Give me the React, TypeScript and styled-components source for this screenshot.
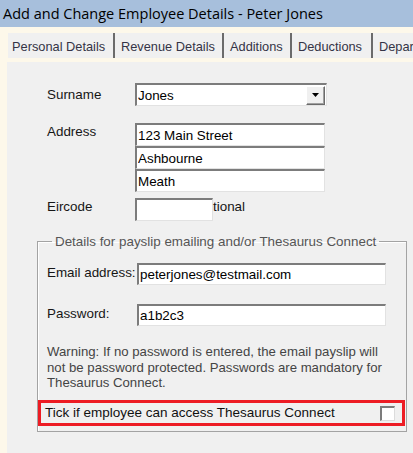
import React, { useState } from "react";
import styled, { createGlobalStyle } from "styled-components";

const GlobalStyle = createGlobalStyle`
  html, body {
    margin: 0;
    padding: 0;
    background: #fdf8ea;
  }
  body {
    font-family: "Liberation Sans", Arial, sans-serif;
    font-size: 13.4px;
    color: #1a1a1a;
  }
`;

const Window = styled.div`
  width: 413px;
  height: 453px;
  overflow: hidden;
  display: flex;
  flex-direction: column;
  background: #fdf8ea;
`;

const TitleBar = styled.div`
  height: 27px;
  flex: none;
  background: #a7bfdc;
  display: flex;
  align-items: center;
  padding-left: 3px;
  font-family: "Open Sans", "Noto Sans", sans-serif;
  font-size: 14.5px;
  color: #000;
  white-space: nowrap;
`;

const TabStrip = styled.div`
  flex: none;
  display: flex;
  padding: 6px 0 0 8px;
  margin-bottom: 4px;
  white-space: nowrap;
`;

const Tab = styled.div<{ $w: number; $first?: boolean }>`
  flex: none;
  width: ${(p) => p.$w}px;
  height: 25px;
  box-sizing: border-box;
  background: #f0f0f0;
  border-left: ${(p) => (p.$first ? "none" : "2px solid #6b6b6b")};
  display: flex;
  align-items: center;
  padding: 1px 0 0 ${(p) => (p.$first ? 4 : 6)}px;
  font-size: 12.8px;
  color: #343446;
  cursor: default;
  overflow: hidden;
`;

const Panel = styled.div`
  flex: 1;
  margin-left: 7px;
  background: #f0f0f0;
  padding: 21px 0 0 0;
`;

const Field = styled.div<{ $mt?: number; $col?: number; $indent?: number }>`
  display: grid;
  grid-template-columns: ${(p) => p.$col ?? 88}px auto;
  align-items: start;
  margin-top: ${(p) => p.$mt ?? 0}px;
  padding-left: ${(p) => p.$indent ?? 40}px;
`;

const Label = styled.div<{ $pt?: number }>`
  line-height: 15px;
  padding-top: ${(p) => p.$pt ?? 0}px;
  color: #161616;
  white-space: nowrap;
`;

const Stack = styled.div`
  display: flex;
  flex-direction: column;
`;

const Sunken = styled.div<{ $w: number; $h?: number }>`
  width: ${(p) => p.$w}px;
  height: ${(p) => p.$h ?? 23}px;
  box-sizing: border-box;
  background: #fff;
  border-top: 2px solid #7c7c7c;
  border-left: 2px solid #7c7c7c;
  border-right: 1px solid #e2e2e2;
  border-bottom: 1px solid #e2e2e2;
  display: flex;
  align-items: center;
`;

const TextInput = styled.input`
  flex: 1;
  min-width: 0;
  height: 100%;
  border: none;
  outline: none;
  background: transparent;
  padding: 0 0 0 1px;
  margin: 0;
  font-family: "Liberation Sans", Arial, sans-serif;
  font-size: 13.4px;
  color: #000;
`;

const DropButton = styled.div`
  width: 19px;
  height: 19px;
  flex: none;
  box-sizing: border-box;
  margin-right: 1px;
  background: #f0f0f0;
  border-top: 1px solid #fff;
  border-left: 1px solid #fff;
  border-right: 1px solid #6b6b6b;
  border-bottom: 1px solid #6b6b6b;
  box-shadow: inset -1px -1px 0 #a0a0a0;
  display: flex;
  align-items: center;
  justify-content: center;
`;

const InlineRow = styled.div`
  display: flex;
  align-items: flex-start;
`;

const Aside = styled.span`
  line-height: 15px;
  padding-top: 1px;
  color: #161616;
`;

const Group = styled.fieldset`
  margin: 13px 0 0 30px;
  width: 370px;
  box-sizing: border-box;
  border: 1px solid #a3a3a3;
  box-shadow: inset 1px 1px 0 #fff;
  padding: 14px 9px 5px 9px;
  min-width: 0;
`;

const Legend = styled.legend`
  margin-left: 5px;
  padding: 0 3px;
  line-height: 15px;
  color: #555;
`;

const Warning = styled.p`
  margin: 18px 0 0 0;
  font-size: 13.2px;
  line-height: 15.5px;
  color: #444;
  width: 345px;
`;

const Highlight = styled.div`
  margin: 9px -8px 0 -9px;
  height: 26px;
  box-sizing: border-box;
  border: 3px solid #ed1c24;
  display: flex;
  align-items: center;
  justify-content: space-between;
  padding: 0 7px 0 4px;
  color: #111;
  font-size: 13.5px;
`;

const CheckBox = styled.button<{ $on: boolean }>`
  width: 15px;
  height: 15px;
  padding: 0;
  margin: 2px 0 0 0;
  box-sizing: border-box;
  background: #fff;
  border-top: 2px solid #7c7c7c;
  border-left: 2px solid #7c7c7c;
  border-right: 1px solid #dcdcdc;
  border-bottom: 1px solid #dcdcdc;
  display: flex;
  align-items: center;
  justify-content: center;
  cursor: pointer;
`;

const tabs = [
  { name: "Personal Details", w: 105 },
  { name: "Revenue Details", w: 109 },
  { name: "Additions", w: 68 },
  { name: "Deductions", w: 81 },
  { name: "Departments", w: 60 },
];

function App() {
  const [surname, setSurname] = useState("Jones");
  const [address, setAddress] = useState(["123 Main Street", "Ashbourne", "Meath"]);
  const [eircode, setEircode] = useState("");
  const [email, setEmail] = useState("peterjones@testmail.com");
  const [password, setPassword] = useState("a1b2c3");
  const [connect, setConnect] = useState(false);

  const setLine = (i: number, v: string) => {
    const next = [...address];
    next[i] = v;
    setAddress(next);
  };

  return (
    <Window>
      <GlobalStyle />
      <TitleBar>Add and Change Employee Details - Peter Jones</TitleBar>
      <TabStrip>
        {tabs.map((t, i) => (
          <Tab key={t.name} $w={t.w} $first={i === 0}>
            {t.name}
          </Tab>
        ))}
      </TabStrip>
      <Panel>
        <Field>
          <Label $pt={4}>Surname</Label>
          <Sunken $w={192}>
            <TextInput value={surname} onChange={(e) => setSurname(e.target.value)} />
            <DropButton>
              <svg width="7" height="4" viewBox="0 0 7 4">
                <path d="M0 0h7L3.5 4z" fill="#000" />
              </svg>
            </DropButton>
          </Sunken>
        </Field>

        <Field $mt={17}>
          <Label $pt={1}>Address</Label>
          <Stack>
            {address.map((line, i) => (
              <Sunken key={i} $w={190}>
                <TextInput value={line} onChange={(e) => setLine(i, e.target.value)} />
              </Sunken>
            ))}
          </Stack>
        </Field>

        <Field $mt={6}>
          <Label $pt={1}>Eircode</Label>
          <InlineRow>
            <Sunken $w={78}>
              <TextInput value={eircode} onChange={(e) => setEircode(e.target.value)} />
            </Sunken>
            <Aside>tional</Aside>
          </InlineRow>
        </Field>

        <Group>
          <Legend>Details for payslip emailing and/or Thesaurus Connect</Legend>
          <Field $col={90} $indent={0}>
            <Label $pt={2}>Email address:</Label>
            <Sunken $w={249} $h={22}>
              <TextInput value={email} onChange={(e) => setEmail(e.target.value)} />
            </Sunken>
          </Field>
          <Field $col={90} $indent={0} $mt={19}>
            <Label $pt={2}>Password:</Label>
            <Sunken $w={249} $h={22}>
              <TextInput value={password} onChange={(e) => setPassword(e.target.value)} />
            </Sunken>
          </Field>
          <Warning>
            Warning: If no password is entered, the email payslip will not be password
            protected. Passwords are mandatory for Thesaurus Connect.
          </Warning>
          <Highlight>
            <span>Tick if employee can access Thesaurus Connect</span>
            <CheckBox $on={connect} onClick={() => setConnect(!connect)} aria-pressed={connect}>
              {connect && (
                <svg width="9" height="8" viewBox="0 0 9 8">
                  <path d="M1 4l2.5 2.5L8 1" stroke="#000" strokeWidth="1.6" fill="none" />
                </svg>
              )}
            </CheckBox>
          </Highlight>
        </Group>
      </Panel>
    </Window>
  );
}

export default App;
